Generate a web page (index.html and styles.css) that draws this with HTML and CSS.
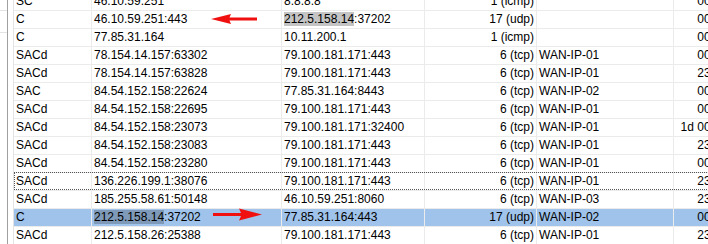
FILE: index.html
```html
<!DOCTYPE html>
<html>
<head>
<meta charset="utf-8">
<link rel="stylesheet" href="styles.css">
</head>
<body>
<div class="pane">
  <div class="side"></div>
  <div class="list">
    <div class="row"><div class="cell">SC</div><div class="cell">46.10.59.251</div><div class="cell">8.8.8.8</div><div class="cell num">1 (icmp)</div><div class="cell"></div><div class="cell num">00:00:27</div></div>
    <div class="row"><div class="cell">C</div><div class="cell">46.10.59.251:443</div><div class="cell"><span class="mark">212.5.158.14</span>:37202</div><div class="cell num">17 (udp)</div><div class="cell"></div><div class="cell num">00:00:15</div></div>
    <div class="row"><div class="cell">C</div><div class="cell">77.85.31.164</div><div class="cell">10.11.200.1</div><div class="cell num">1 (icmp)</div><div class="cell"></div><div class="cell num">00:00:09</div></div>
    <div class="row"><div class="cell">SACd</div><div class="cell">78.154.14.157:63302</div><div class="cell">79.100.181.171:443</div><div class="cell num">6 (tcp)</div><div class="cell">WAN-IP-01</div><div class="cell num">00:04:51</div></div>
    <div class="row"><div class="cell">SACd</div><div class="cell">78.154.14.157:63828</div><div class="cell">79.100.181.171:443</div><div class="cell num">6 (tcp)</div><div class="cell">WAN-IP-01</div><div class="cell num">23:58:02</div></div>
    <div class="row"><div class="cell">SAC</div><div class="cell">84.54.152.158:22624</div><div class="cell">77.85.31.164:8443</div><div class="cell num">6 (tcp)</div><div class="cell">WAN-IP-02</div><div class="cell num">00:00:08</div></div>
    <div class="row"><div class="cell">SACd</div><div class="cell">84.54.152.158:22695</div><div class="cell">79.100.181.171:443</div><div class="cell num">6 (tcp)</div><div class="cell">WAN-IP-01</div><div class="cell num">00:12:40</div></div>
    <div class="row"><div class="cell">SACd</div><div class="cell">84.54.152.158:23073</div><div class="cell">79.100.181.171:32400</div><div class="cell num">6 (tcp)</div><div class="cell">WAN-IP-01</div><div class="cell num">1d 00:02:17</div></div>
    <div class="row"><div class="cell">SACd</div><div class="cell">84.54.152.158:23083</div><div class="cell">79.100.181.171:443</div><div class="cell num">6 (tcp)</div><div class="cell">WAN-IP-01</div><div class="cell num">23:41:09</div></div>
    <div class="row"><div class="cell">SACd</div><div class="cell">84.54.152.158:23280</div><div class="cell">79.100.181.171:443</div><div class="cell num">6 (tcp)</div><div class="cell">WAN-IP-01</div><div class="cell num">00:33:55</div></div>
    <div class="row focus"><div class="cell">SACd</div><div class="cell">136.226.199.1:38076</div><div class="cell">79.100.181.171:443</div><div class="cell num">6 (tcp)</div><div class="cell">WAN-IP-01</div><div class="cell num">23:59:30</div></div>
    <div class="row"><div class="cell">SACd</div><div class="cell">185.255.58.61:50148</div><div class="cell">46.10.59.251:8060</div><div class="cell num">6 (tcp)</div><div class="cell">WAN-IP-03</div><div class="cell num">23:52:14</div></div>
    <div class="row selected"><div class="cell">C</div><div class="cell"><span class="mark">212.5.158.14</span>:37202</div><div class="cell">77.85.31.164:443</div><div class="cell num">17 (udp)</div><div class="cell">WAN-IP-02</div><div class="cell num">00:00:15</div></div>
    <div class="row"><div class="cell">SACd</div><div class="cell">212.5.158.26:25388</div><div class="cell">79.100.181.171:443</div><div class="cell num">6 (tcp)</div><div class="cell">WAN-IP-01</div><div class="cell num">23:47:36</div></div>
  </div>
  <svg class="arrow arrow-left" width="50" height="14" viewBox="0 0 50 14"><path d="M1 7 L21 2 L19.5 5.5 L47 5.5 L47 8.5 L19.5 8.5 L21 12 Z" fill="#f01010"/></svg>
  <svg class="arrow arrow-right" width="54" height="15" viewBox="0 0 54 15"><path d="M51 7.5 L28 1.5 L30 6 L2 6 L2 9 L30 9 L28 13.5 Z" fill="#f01010"/></svg>
</div>
</body>
</html>
```

FILE: styles.css
```css
html, body {
  margin: 0;
  padding: 0;
  background: #ffffff;
  overflow: hidden;
}

body {
  font-family: "Liberation Sans", Arial, sans-serif;
  font-size: 12px;
  color: #000000;
}

.pane {
  position: relative;
  display: flex;
  height: 244px;
  overflow: hidden;
}

.side {
  flex: none;
  width: 7px;
  border-right: 1px solid #a0a0a0;
  background:
    linear-gradient(#e3e3e3, #e3e3e3) 0 10px / 100% 1px no-repeat,
    linear-gradient(#e3e3e3, #e3e3e3) 0 32px / 100% 1px no-repeat,
    #ffffff;
}

.list {
  flex: none;
  margin-left: 5px;
  margin-top: -8px;
  border-left: 1px solid #e3e3e3;
}

.row {
  position: relative;
  display: grid;
  grid-template-columns: 78px 190px 143px 112px 137px 73px;
  height: 18px;
  box-sizing: border-box;
  border-top: 1px solid #ebebeb;
}

.cell {
  box-sizing: border-box;
  border-right: 1px solid #ebebeb;
  padding: 0 2px;
  line-height: 17px;
  white-space: nowrap;
  overflow: hidden;
}

.num {
  text-align: right;
}

.mark {
  background: #c4c4c4;
}

.selected {
  background: #9fc3ea;
  background-clip: padding-box;
}

.selected .mark {
  background: #7f9ab8;
}

.focus::after {
  content: "";
  position: absolute;
  left: 0;
  right: 0;
  top: -1px;
  bottom: 0;
  border: 1px dotted #555555;
  border-right: none;
  pointer-events: none;
}

.arrow {
  position: absolute;
}

.arrow-left {
  left: 210px;
  top: 12px;
}

.arrow-right {
  left: 211px;
  top: 207px;
}
```
